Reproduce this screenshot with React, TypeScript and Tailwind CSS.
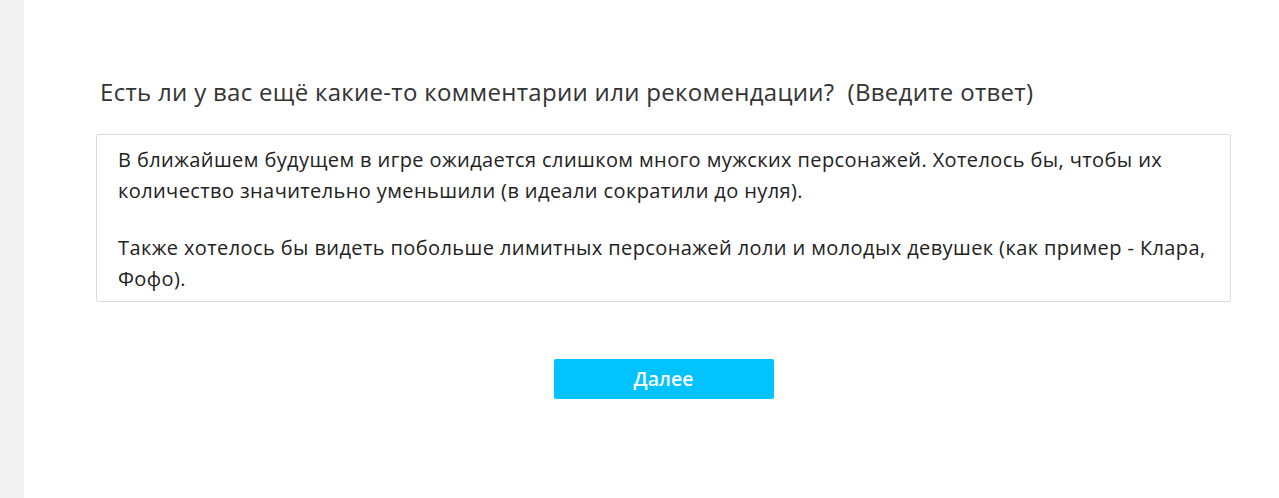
import React from 'react';

const App = () => {
  return (
    <div className="flex w-full h-[498px] bg-white font-['Open_Sans','Noto_Sans',sans-serif]">
      {/* Left gray strip */}
      <div className="w-[24px] shrink-0 bg-[#f2f2f2]" />

      <div className="flex-1 pl-[72px] pr-[48px] pt-[74px]">
        <h2 className="pl-[4px] text-[24px] leading-[36px] tracking-[0.3px] text-[#333333] whitespace-pre">
          Есть ли у вас ещё какие-то комментарии или рекомендации?  (Введите ответ)
        </h2>

        <div className="mt-[24px] border border-[#dcdcdc] rounded-[2px] pl-[21px] pr-[20px] pt-[9px] pb-[7px] text-[20px] tracking-[0.4px] text-[#222222]">
          <p className="leading-[31px]">
            В ближайшем будущем в игре ожидается слишком много мужских персонажей. Хотелось бы, чтобы их количество значительно уменьшили (в идеали сократили до нуля).
          </p>
          <p className="leading-[31px] mt-[26px]">
            Также хотелось бы видеть побольше лимитных персонажей лоли и молодых девушек (как пример - Клара, Фофо).
          </p>
        </div>

        <div className="flex justify-center pt-[57px]">
          <button className="w-[220px] h-[40px] rounded-[2px] bg-[#00c3ff] text-white text-[19.5px] font-semibold">
            Далее
          </button>
        </div>
      </div>
    </div>
  );
};

export default App;
